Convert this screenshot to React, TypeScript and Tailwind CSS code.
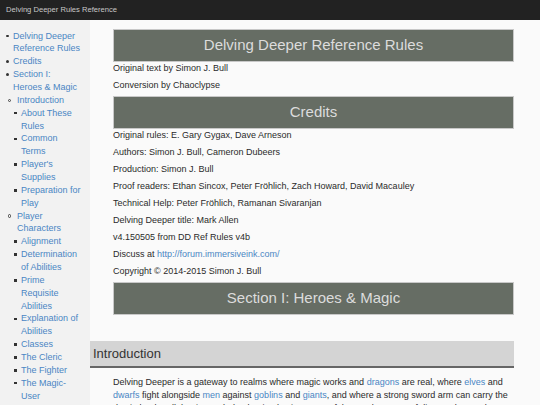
import React from "react";

const nav: { t: string; l: number }[] = [
  { t: "Delving Deeper Reference Rules", l: 1 },
  { t: "Credits", l: 1 },
  { t: "Section I: Heroes & Magic", l: 1 },
  { t: "Introduction", l: 2 },
  { t: "About These Rules", l: 3 },
  { t: "Common Terms", l: 3 },
  { t: "Player's Supplies", l: 3 },
  { t: "Preparation for Play", l: 3 },
  { t: "Player Characters", l: 2 },
  { t: "Alignment", l: 3 },
  { t: "Determination of Abilities", l: 3 },
  { t: "Prime Requisite Abilities", l: 3 },
  { t: "Explanation of Abilities", l: 3 },
  { t: "Classes", l: 3 },
  { t: "The Cleric", l: 3 },
  { t: "The Fighter", l: 3 },
  { t: "The Magic-User", l: 3 },
];

function NavItem({ t, l }: { t: string; l: number }) {
  if (l === 1)
    return (
      <li className="flex pl-[6px]">
        <span className="w-[7px] h-[12.857px] flex items-center shrink-0">
          <span className="block w-[2.6px] h-[2.6px] rounded-full bg-[#333]" />
        </span>
        <a className="text-[#4a86c4]">{t}</a>
      </li>
    );
  if (l === 2)
    return (
      <li className="flex pl-[8px]">
        <span className="w-[9px] h-[12.857px] flex items-center shrink-0">
          <span className="block w-[3.4px] h-[3.4px] rounded-full border-[0.8px] border-[#444]" />
        </span>
        <a className="text-[#4a86c4]">{t}</a>
      </li>
    );
  return (
    <li className="flex pl-[14px]">
      <span className="w-[7px] h-[12.857px] flex items-center shrink-0">
        <span className="block w-[2.6px] h-[2.6px] bg-[#333]" />
      </span>
      <a className="text-[#4a86c4]">{t}</a>
    </li>
  );
}

function H1({ children }: { children: React.ReactNode }) {
  return (
    <h1 className="ml-[23px] mr-[26px] h-[33px] flex items-center justify-center bg-[#666d64] border border-[#c8c8c8] text-[15px] text-[#dcdcdc] font-normal">
      {children}
    </h1>
  );
}

function P({ children }: { children: React.ReactNode }) {
  return <p className="ml-[23px] mb-[4px] leading-[13px]">{children}</p>;
}

function L({ children }: { children: React.ReactNode }) {
  return <a className="text-[#4a86c4]">{children}</a>;
}

export default function App() {
  return (
    <div
      className="w-[540px] h-[405px] overflow-hidden flex flex-col bg-[#fafafa] text-[9px] text-[#2a2a2a]"
      style={{ fontFamily: '"Liberation Sans", Arial, sans-serif' }}
    >
      <div className="h-[20px] shrink-0 bg-[#222] flex items-center px-[6px] text-[7.6px] text-[#c8c8c8]">
        Delving Deeper Rules Reference
      </div>
      <div className="flex flex-1 min-h-0">
        <nav className="w-[90px] shrink-0 bg-[#f2f2f2] pt-[9.5px] pr-[8.5px] leading-[12.857px]">
          <ul>
            {nav.map((n) => (
              <NavItem key={n.t} t={n.t} l={n.l} />
            ))}
          </ul>
        </nav>
        <main className="flex-1 pt-[9px]">
          <H1>Delving Deeper Reference Rules</H1>
          <P>Original text by Simon J. Bull</P>
          <P>Conversion by Chaoclypse</P>
          <H1>Credits</H1>
          <P>Original rules: E. Gary Gygax, Dave Arneson</P>
          <P>Authors: Simon J. Bull, Cameron Dubeers</P>
          <P>Production: Simon J. Bull</P>
          <P>Proof readers: Ethan Sincox, Peter Fröhlich, Zach Howard, David Macauley</P>
          <P>Technical Help: Peter Fröhlich, Ramanan Sivaranjan</P>
          <P>Delving Deeper title: Mark Allen</P>
          <P>v4.150505 from DD Ref Rules v4b</P>
          <P>
            Discuss at <L>http://forum.immersiveink.com/</L>
          </P>
          <P>Copyright © 2014-2015 Simon J. Bull</P>
          <H1>Section I: Heroes &amp; Magic</H1>
          <h2 className="mt-[26px] mr-[26px] h-[27px] bg-[#d4d4d4] border-b-2 border-[#666] flex items-center pl-[3px] text-[13px] text-[#333] font-normal">
            Introduction
          </h2>
          <p className="ml-[23px] mr-[16px] mt-[8px] leading-[12.857px]">
            Delving Deeper is a gateway to realms where magic works and <L>dragons</L> are real, where{" "}
            <L>elves</L> and <L>dwarfs</L> fight alongside <L>men</L> against <L>goblins</L> and{" "}
            <L>giants</L>, and where a strong sword arm can carry the day in battle. All that is needed to
            begin play is a copy of these rules, a set of dice, and a good imagination.
          </p>
        </main>
      </div>
    </div>
  );
}
